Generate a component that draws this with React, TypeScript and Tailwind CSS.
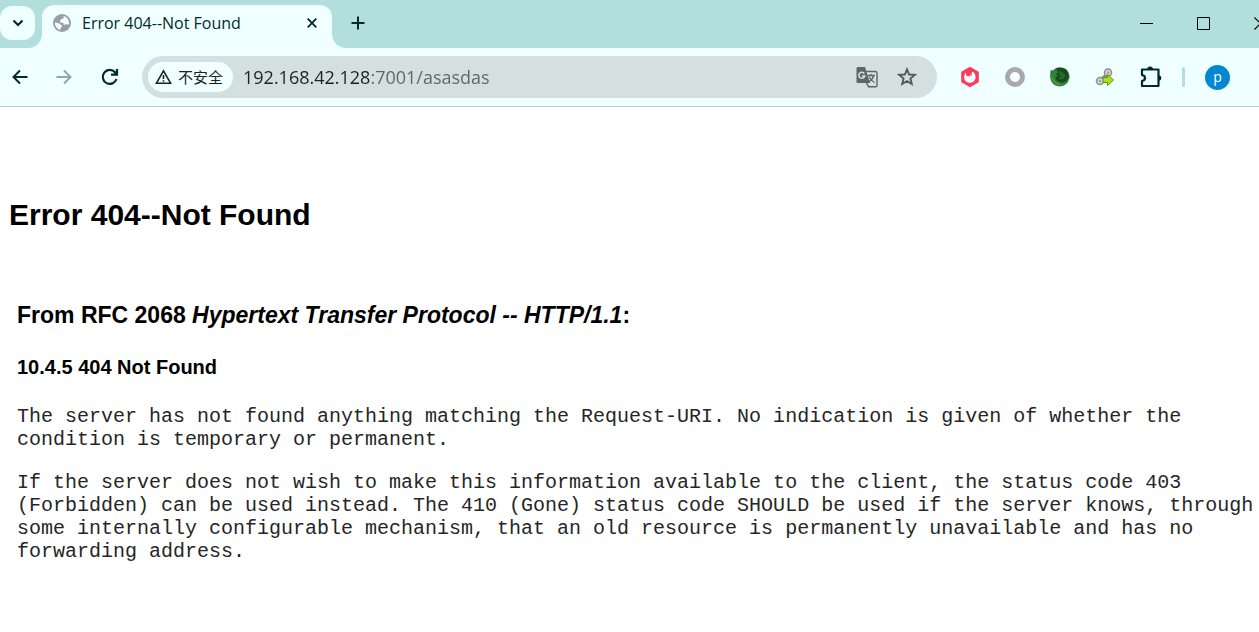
import type { ReactNode } from "react";

function IconButton({
  label,
  className,
  children,
}: {
  label: string;
  className: string;
  children: ReactNode;
}) {
  return (
    <button
      type="button"
      aria-label={label}
      className={`flex shrink-0 items-center justify-center ${className}`}
    >
      {children}
    </button>
  );
}

function GlobeIcon() {
  return (
    <svg width="18" height="18" viewBox="0 0 18 18" className="shrink-0">
      <circle cx="9" cy="9" r="9" fill="#9a9ca6" />
      <path
        d="M10.500 2C11.200 3.400 10.600 4.600 9.200 4.800C7.800 5 8 6.200 7.200 6.800C6.400 7.600 7 8.600 8.400 8.600C10.400 8.600 11 9.600 10.600 11C12 11.200 13 10.200 14.400 10.400L15.900 10.600C16.600 6.600 14.600 3.200 10.500 2ZM2 8.400C3.400 9 5.400 8.600 6.600 9.800C7.600 10.800 9.400 11 9 12.400C8.600 13.600 7.400 13.400 7.400 14.600L7.600 16C4.200 15.200 1.800 12.200 2 8.400Z"
        fill="#f0ffff"
      />
    </svg>
  );
}

function TranslateIcon() {
  return (
    <svg width="22" height="22" viewBox="0 0 22 22">
      <path d="M2 1H9L14 17H2Q.5 17 .5 15.500V2.500Q.5 1 2 1Z" fill="#5f6467" />
      <path
        d="M9.500 5.500H19.500Q21 5.500 21 7V19.500Q21 20.700 19.500 20.700H12.500L10.500 17"
        fill="none"
        stroke="#5f6467"
        strokeWidth="1.400"
      />
      <path
        d="M8.300 7.600A3 3 0 1 0 8.700 10H6"
        fill="none"
        stroke="#d3e0df"
        strokeWidth="1.600"
      />
      <path
        d="M11.500 9.500H19M15 8V9.500M17.600 9.500C17 12.500 15 14.500 12.800 15.800M13.200 11C14.500 13.500 16 15 18.500 16.500"
        fill="none"
        stroke="#5f6467"
        strokeWidth="1.300"
      />
    </svg>
  );
}

function TabStrip() {
  return (
    <div className="flex h-12 items-start bg-[#b2dfdd] text-[#002b2b]">
      <IconButton
        label="Search tabs"
        className="mt-[6px] h-[34px] w-[35px] rounded-xl bg-[#f0ffff]"
      >
        <svg width="12" height="8" viewBox="0 0 12 8" fill="none" stroke="currentColor" strokeWidth="2.200">
          <path d="M1.500 1.500L6 6L10.500 1.500" />
        </svg>
      </IconButton>
      <div className="relative mt-[5px] ml-[7px] flex h-[43px] w-[290px] items-start rounded-t-xl bg-[#f0ffff] pr-2 pl-[11px]">
        <svg className="absolute bottom-0 -left-[14px]" width="14" height="14" viewBox="0 0 14 14">
          <path d="M14 0V14H0A14 14 0 0 0 14 0Z" fill="#f0ffff" />
        </svg>
        <svg className="absolute -right-[14px] bottom-0" width="14" height="14" viewBox="0 0 14 14">
          <path d="M0 0V14H14A14 14 0 0 1 0 0Z" fill="#f0ffff" />
        </svg>
        <div className="flex h-9 flex-1 items-center gap-[11px]">
          <GlobeIcon />
          <span className="flex-1 font-['Open_Sans',sans-serif] text-base whitespace-nowrap">
            Error 404--Not Found
          </span>
          <IconButton label="Close tab" className="h-6 w-6">
            <svg width="10" height="10" viewBox="0 0 10 10" stroke="currentColor" strokeWidth="1.800">
              <path d="M.7 .7L9.300 9.300M9.300 .7L.7 9.300" />
            </svg>
          </IconButton>
        </div>
      </div>
      <IconButton label="New tab" className="ml-[9px] h-[46px] w-[34px]">
        <svg width="14" height="14" viewBox="0 0 14 14" stroke="currentColor" strokeWidth="2">
          <path d="M7 .5V13.500M.5 7H13.500" />
        </svg>
      </IconButton>
      <div className="-mr-[30px] ml-auto flex text-black">
        <IconButton label="Minimize" className="h-[47px] w-[57px]">
          <svg width="13" height="13" viewBox="0 0 13 13" stroke="currentColor">
            <path d="M0 6.500H13" />
          </svg>
        </IconButton>
        <IconButton label="Maximize" className="h-[47px] w-[57px]">
          <svg width="13" height="13" viewBox="0 0 13 13" fill="none" stroke="currentColor">
            <path d="M.5 .5H12.500V12.500H.5Z" />
          </svg>
        </IconButton>
        <IconButton label="Close window" className="h-[47px] w-[57px]">
          <svg width="13" height="13" viewBox="0 0 13 13" stroke="currentColor" strokeWidth="1.200">
            <path d="M.5 .5L12.500 12.500M12.500 .5L.5 12.500" />
          </svg>
        </IconButton>
      </div>
    </div>
  );
}

function AddressBar() {
  return (
    <div className="flex h-[42px] flex-1 items-center rounded-full bg-[#d3e0df] pr-[14px] pl-[6px]">
      <button
        type="button"
        className="flex h-[30px] shrink-0 items-center gap-[6px] rounded-full bg-[#f0ffff] pr-[10px] pl-[7px] font-['Noto_Sans_CJK_SC',sans-serif] text-[15px] whitespace-nowrap text-[#1f1f1f]"
      >
        <svg width="17" height="16" viewBox="0 0 17 16" fill="none" stroke="currentColor" strokeWidth="1.600">
          <path d="M8.500 1.800L15.600 14.200H1.400ZM8.500 6V10M8.500 11.200V12.800" />
        </svg>
        不安全
      </button>
      <input
        type="text"
        aria-label="Address"
        defaultValue="192.168.42.128:7001/asasdas"
        className="ml-[10px] h-8 min-w-0 flex-1 bg-[linear-gradient(90deg,#1f1f1f_127px,#5f6467_127px)] bg-clip-text font-['Open_Sans',sans-serif] text-lg text-transparent outline-none"
      />
      <IconButton label="Translate this page" className="h-8 w-10">
        <TranslateIcon />
      </IconButton>
      <IconButton label="Bookmark this page" className="ml-1 h-8 w-8">
        <svg width="20" height="20" viewBox="0 0 20 20" fill="none" stroke="#55595c" strokeWidth="1.900">
          <path d="M10 2.300L12.100 7.500L17.700 7.900L13.400 11.500L14.800 17L10 14L5.200 17L6.600 11.500L2.300 7.900L7.900 7.500Z" />
        </svg>
      </IconButton>
    </div>
  );
}

function Extensions() {
  return (
    <div className="ml-[10px] flex items-center">
      <IconButton label="Hexagon extension" className="h-8 w-[45px]">
        <svg width="20" height="22" viewBox="0 0 20 22">
          <path
            d="M10 1.800L17.800 6.300V15.700L10 20.200L2.200 15.700V6.300Z"
            fill="#f93b5c"
            stroke="#f93b5c"
            strokeWidth="2"
            strokeLinejoin="round"
          />
          <path
            d="M6 6.200C5.400 9.200 6.800 10.400 8.800 10.200C10.200 10 10.200 8.600 10.600 7.200C11.200 5.600 12.600 5.400 13.800 6.600C17 10 15.800 16.800 10 16.800C4 16.800 2.400 10.400 6 6.200Z"
            fill="#fff"
          />
          <path d="M11 5V9.500" stroke="#f93b5c" strokeWidth="1.600" />
        </svg>
      </IconButton>
      <IconButton label="Ring extension" className="h-8 w-[45px]">
        <svg width="22" height="22" viewBox="0 0 22 22">
          <circle cx="11" cy="11" r="7.500" fill="#f7ffff" stroke="#a9a9a9" strokeWidth="5" />
        </svg>
      </IconButton>
      <IconButton label="Fox extension" className="h-8 w-[45px]">
        <svg width="22" height="22" viewBox="0 0 22 22">
          <path d="M1.500 4L3.500 4.500L7 2Q12 0 17 3Q21 7 20.500 12Q18.500 20 11 20.500Q2 20 1 11Z" fill="#34803a" />
          <path d="M7 2.500Q12 .5 17 3.500Q21 8 19 13Q16 17.500 11 16.500Q6 15 6.500 11L9 10.500L7 8L9 6.500Z" fill="#174d1c" />
          <path d="M10 5L13 6L16 9Q16 13 12 13.500L9 12.500L12 11L10 8Z" fill="#286a2e" />
          <path d="M2.500 10Q4 18 12 18.500" fill="none" stroke="#459449" strokeWidth="1.600" />
        </svg>
      </IconButton>
      <IconButton label="Switcher extension" className="h-8 w-[46px]">
        <svg width="20" height="20" viewBox="0 0 20 20">
          <path d="M5 14L14 6" stroke="#8d8d8d" strokeWidth="4" />
          <circle cx="13" cy="5.500" r="3.500" fill="#dadada" stroke="#8d8d95" strokeWidth="1.500" />
          <circle cx="5" cy="14" r="3.500" fill="#dadada" stroke="#8d8d95" strokeWidth="1.500" />
          <path d="M4 13L6 15M12 4.500L14 6.500" stroke="#8d8d95" strokeWidth="1.500" />
          <path d="M8 10.500H12.500V7.500L18.500 13L12.500 18.500V15.500H8Z" fill="#a6e01f" stroke="#62940f" />
        </svg>
      </IconButton>
      <IconButton label="Extensions" className="h-8 w-[45px]">
        <svg width="22" height="22" viewBox="0 0 22 22">
          <path
            d="M2 3.500H18.500V20H2V15Q5 14.500 5 12Q5 9.500 2 9Z"
            fill="none"
            stroke="#002b2b"
            strokeWidth="2.200"
            strokeLinejoin="round"
          />
          <path d="M7.200 3.500A2.900 2.900 0 0 1 13 3.500ZM18.500 9.200A2.800 2.800 0 0 1 18.500 14.800Z" fill="#002b2b" />
        </svg>
      </IconButton>
      <span className="mx-[9px] h-5 w-[3px] rounded-full bg-[#b2dfdd]" />
      <button
        type="button"
        aria-label="Profile"
        className="mr-[29px] ml-[11px] flex h-[25px] w-[25px] items-center justify-center rounded-full bg-[#0288d1] font-['Open_Sans',sans-serif] text-sm leading-none text-white"
      >
        p
      </button>
    </div>
  );
}

function Toolbar() {
  return (
    <div className="flex h-[59px] items-center border-b border-[#afcfce] bg-[#f0ffff] text-[#002b2b]">
      <IconButton label="Back" className="h-9 w-10">
        <svg width="16" height="16" viewBox="0 0 16 16" fill="none" stroke="currentColor" strokeWidth="2">
          <path d="M15.500 8H2M8 1.500L1.500 8L8 14.500" />
        </svg>
      </IconButton>
      <IconButton label="Forward" className="h-9 w-12">
        <svg width="16" height="16" viewBox="0 0 16 16" fill="none" stroke="#8da9a9" strokeWidth="2">
          <path d="M.5 8H14M8 1.500L14.500 8L8 14.500" />
        </svg>
      </IconButton>
      <IconButton label="Reload" className="mr-[10px] h-9 w-11">
        <svg width="18" height="18" viewBox="0 0 18 18" fill="none" stroke="currentColor" strokeWidth="2.200">
          <path d="M15.500 11A7 7 0 1 1 14 4.200L15.500 6M16 1V6.600H10" />
        </svg>
      </IconButton>
      <AddressBar />
      <Extensions />
    </div>
  );
}

export default function App() {
  return (
    <div className="min-h-screen overflow-hidden bg-white text-black">
      <header>
        <TabStrip />
        <Toolbar />
      </header>
      <main className="pt-[90px] pr-1 pl-[17px] font-['Liberation_Sans',Arial,sans-serif]">
        <h1 className="-ml-2 text-3xl leading-9 font-bold">Error 404--Not Found</h1>
        <h2 className="mt-[68px] text-[23px] leading-7 font-bold">
          From RFC 2068 <i>Hypertext Transfer Protocol -- HTTP/1.1</i>:
        </h2>
        <h3 className="mt-[26px] text-xl leading-6 font-bold">10.4.5 404 Not Found</h3>
        <div className="mt-[26px] flex flex-col gap-5 font-['Liberation_Mono','Courier_New',monospace] text-xl leading-[23px] text-neutral-800">
          <p>
            The server has not found anything matching the Request-URI. No indication is given of
            whether the condition is temporary or permanent.
          </p>
          <p>
            If the server does not wish to make this information available to the client, the status
            code 403 (Forbidden) can be used instead. The 410 (Gone) status code SHOULD be used if
            the server knows, through some internally configurable mechanism, that an old resource
            is permanently unavailable and has no forwarding address.
          </p>
        </div>
      </main>
    </div>
  );
}
